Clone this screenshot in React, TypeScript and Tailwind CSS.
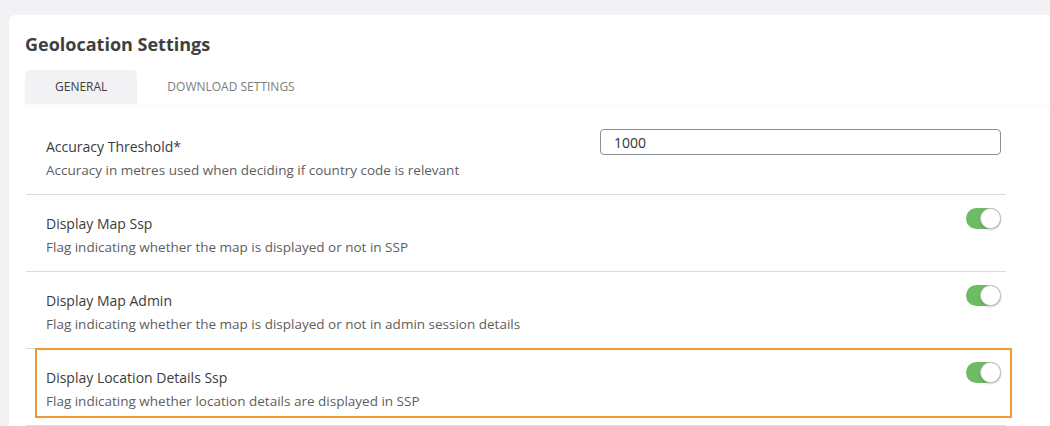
import { useState } from 'react'

type Setting = {
  key: string
  label: string
  description: string
  kind: 'number' | 'toggle'
  value: string | boolean
  highlighted?: boolean
}

const settings: Setting[] = [
  {
    key: 'accuracyThreshold',
    label: 'Accuracy Threshold*',
    description: 'Accuracy in metres used when deciding if country code is relevant',
    kind: 'number',
    value: '1000',
  },
  {
    key: 'displayMapSsp',
    label: 'Display Map Ssp',
    description: 'Flag indicating whether the map is displayed or not in SSP',
    kind: 'toggle',
    value: true,
  },
  {
    key: 'displayMapAdmin',
    label: 'Display Map Admin',
    description: 'Flag indicating whether the map is displayed or not in admin session details',
    kind: 'toggle',
    value: true,
  },
  {
    key: 'displayLocationDetailsSsp',
    label: 'Display Location Details Ssp',
    description: 'Flag indicating whether location details are displayed in SSP',
    kind: 'toggle',
    value: true,
    highlighted: true,
  },
]

function Toggle({ on, onChange }: { on: boolean; onChange: () => void }) {
  return (
    <button
      onClick={onChange}
      className={`relative h-[21px] w-[35px] rounded-full transition ${on ? 'bg-[#6dbb63]' : 'bg-[#d6d6d6]'}`}
    >
      <span
        className={`absolute top-0 h-[21px] w-[21px] rounded-full border border-[#c9c9c9] bg-white shadow-[0_1px_2px_rgba(0,0,0,0.2)] transition-all ${
          on ? 'left-[14px]' : 'left-0'
        }`}
      />
    </button>
  )
}

function SettingRow({ setting, first }: { setting: Setting; first: boolean }) {
  const [value, setValue] = useState(setting.value)

  return (
    <div className={`relative flex justify-between border-b border-[#dcdcdc] pr-[5px] pl-[20px] ${first ? 'h-[91px]' : 'h-[77px]'}`}>
      <div className={first ? 'pt-[33px]' : 'pt-[19px]'}>
        <p className="text-[14px] leading-[20px] text-[#3b3b3b]">{setting.label}</p>
        <p className="mt-[3px] text-[13.5px] leading-[20px] text-[#5e5e5e]">{setting.description}</p>
      </div>
      {setting.kind === 'number' ? (
        <input
          value={value as string}
          onChange={(e) => setValue(e.target.value)}
          className="mt-[25px] h-[26px] w-[401px] rounded-[4px] border border-[#8c9196] pl-[13px] text-[14px] text-[#333] outline-none"
        />
      ) : (
        <div className="pt-[13px]">
          <Toggle on={value as boolean} onChange={() => setValue(!value)} />
        </div>
      )}
      {setting.highlighted && (
        <div className="pointer-events-none absolute top-[-1px] right-[-6px] left-[9px] h-[70px] border-2 border-[#ef9a32]" />
      )}
    </div>
  )
}

export default function App() {
  const [tab, setTab] = useState('general')

  return (
    <div className="h-[426px] overflow-hidden bg-[#f2f2f4] pt-[15px] pl-[9px] font-['Open_Sans',sans-serif]">
      <div className="h-full rounded-tl-[6px] bg-white pt-[17px] pl-[16px]">
        <h1 className="text-[18px] leading-[24px] font-bold text-[#3f3f3f]">Geolocation Settings</h1>

        <div className="mt-[14px] flex h-[34px] shadow-[0_3px_3px_rgba(0,0,0,0.025)]">
          {[
            { id: 'general', label: 'General' },
            { id: 'download', label: 'Download Settings' },
          ].map((t) => (
            <button
              key={t.id}
              onClick={() => setTab(t.id)}
              className={`rounded-t-[5px] px-[30px] text-[12px] uppercase ${
                tab === t.id ? 'bg-[#f2f2f4] text-[#3f3f3f]' : 'text-[#7c7c7c]'
              }`}
            >
              {t.label}
            </button>
          ))}
        </div>

        <div className="ml-[1px] w-[980px]">
          {settings.map((s, i) => (
            <SettingRow key={s.key} setting={s} first={i === 0} />
          ))}
        </div>
      </div>
    </div>
  )
}
